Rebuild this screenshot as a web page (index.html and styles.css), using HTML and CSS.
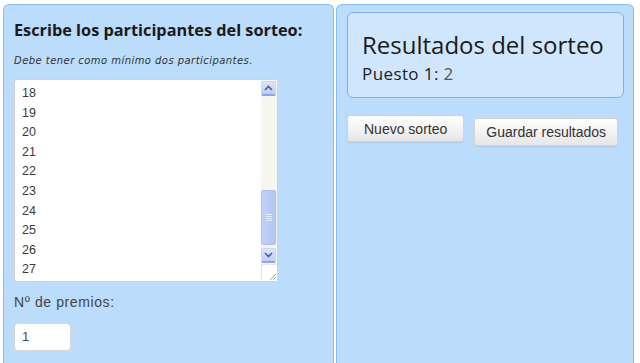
FILE: index.html
```html
<!DOCTYPE html>
<html lang="es">
<head>
  <meta charset="UTF-8">
  <title>Sorteo</title>
  <link rel="stylesheet" href="styles.css">
</head>
<body>

<div class="page">
  <section class="panel panel-left">
    <h2 class="title">Escribe los participantes del sorteo:</h2>
    <p class="hint">Debe tener como mínimo dos participantes.</p>

    <div class="textarea">
      <div class="lines">
        <div>18</div>
        <div>19</div>
        <div>20</div>
        <div>21</div>
        <div>22</div>
        <div>23</div>
        <div>24</div>
        <div>25</div>
        <div>26</div>
        <div>27</div>
      </div>
      <div class="scrollbar">
        <div class="sb-btn">
          <svg width="9" height="6" viewBox="0 0 9 6"><path d="M1 5 L4.5 1.5 L8 5" fill="none" stroke="#4d6185" stroke-width="1.6"/></svg>
        </div>
        <div class="sb-track">
          <div class="sb-thumb"><span></span><span></span><span></span><span></span></div>
        </div>
        <div class="sb-btn">
          <svg width="9" height="6" viewBox="0 0 9 6"><path d="M1 1 L4.5 4.5 L8 1" fill="none" stroke="#4d6185" stroke-width="1.6"/></svg>
        </div>
        <div class="sb-corner">
          <svg width="10" height="10" viewBox="0 0 10 10"><path d="M9 3 L3 9 M9 6 L6 9" stroke="#a8a8a8" stroke-width="1"/></svg>
        </div>
      </div>
    </div>

    <label class="label">Nº de premios:</label>
    <div class="num-input">1</div>
  </section>

  <section class="panel panel-right">
    <div class="results">
      <h1 class="results-title">Resultados del sorteo</h1>
      <p class="results-row">Puesto 1: <span class="winner">2</span></p>
    </div>
    <div class="actions">
      <button class="btn btn-new">Nuevo sorteo</button>
      <button class="btn btn-save">Guardar resultados</button>
    </div>
  </section>
</div>

</body>
</html>
```

FILE: styles.css
```css
:root {
  --panel-bg: #bbdcfb;
  --panel-border: #85bcf2;
  --box-bg: #cfe6fd;
  --text-dark: #1a1a1a;
  --text-soft: #444;
}
* {
  margin: 0;
  padding: 0;
  box-sizing: border-box;
}
body {
  background: #fff;
  font-family: 'Liberation Sans', Arial, sans-serif;
  overflow: hidden;
}
.page {
  display: flex;
  gap: 2px;
  padding: 4px 0 0 3px;
  height: 363px;
  overflow: hidden;
}
.panel {
  background: var(--panel-bg);
  border: 1px solid var(--panel-border);
  border-bottom: none;
  border-radius: 6px 6px 0 0;
  height: 359px;
}
.panel-left {
  width: 331px;
  padding: 15px 10px 0 10px;
}
.panel-right {
  width: 298px;
  padding: 7px 9px 0 10px;
}
.title {
  font-family: 'Open Sans', 'DejaVu Sans', sans-serif;
  font-weight: 700;
  font-size: 16.3px;
  line-height: 20px;
  color: var(--text-dark);
}
.hint {
  font-family: 'DejaVu Sans', sans-serif;
  font-style: italic;
  font-size: 10px;
  line-height: 13px;
  letter-spacing: 0.45px;
  color: #333;
  margin-top: 14px;
}
.textarea {
  display: flex;
  width: 264px;
  height: 203px;
  margin-top: 12px;
  background: #fff;
  border: 1px solid #d2d2d2;
  border-radius: 3px;
}
.lines {
  flex: 1;
  padding: 4px 0 0 7px;
  font-size: 12.5px;
  line-height: 19.6px;
  color: #3a3a3a;
}
.scrollbar {
  width: 16px;
  display: flex;
  flex-direction: column;
  background: #f6f6ef;
}
.sb-btn {
  height: 15px;
  margin: 1px 1px 0 0;
  display: flex;
  align-items: center;
  justify-content: center;
  background: linear-gradient(#dae4fb, #bccdf5);
  border: 1px solid #c9d6f3;
  border-bottom: 2px solid #8aa6e6;
  border-radius: 2px;
}
.sb-track {
  flex: 1;
  display: flex;
  flex-direction: column;
  justify-content: flex-end;
  padding: 0 1px 2px 0;
}
.sb-thumb {
  height: 55px;
  display: flex;
  flex-direction: column;
  align-items: center;
  justify-content: center;
  gap: 1px;
  background: linear-gradient(90deg, #c2d2f7, #b2c6f4);
  border: 1px solid #a9bff0;
  border-radius: 2px;
}
.sb-thumb span {
  width: 6px;
  height: 1px;
  background: #e3eafb;
}
.sb-corner {
  height: 17px;
  margin-top: 1px;
  display: flex;
  align-items: flex-end;
  justify-content: flex-end;
  background: #fff;
  border-top: 1px solid #e6e6e6;
  border-left: 1px solid #e6e6e6;
}
.label {
  display: block;
  margin-top: 12px;
  font-size: 14px;
  line-height: 17px;
  color: var(--text-soft);
  letter-spacing: 0.6px;
}
.num-input {
  width: 57px;
  height: 28px;
  margin-top: 12px;
  padding: 5px 0 0 7px;
  background: #fff;
  border: 1px solid #d6d6d6;
  border-radius: 4px;
  font-size: 13px;
  color: #444;
}
.results {
  background: var(--box-bg);
  border: 1px solid #78b2f0;
  border-radius: 6px;
  height: 86px;
  padding: 18px 14px 0 14px;
}
.results-title {
  font-family: 'Open Sans', 'DejaVu Sans', sans-serif;
  font-weight: 400;
  font-size: 24px;
  line-height: 28px;
  color: var(--text-dark);
}
.results-row {
  font-family: 'Open Sans', 'DejaVu Sans', sans-serif;
  font-size: 17px;
  line-height: 20px;
  margin-top: 5px;
  letter-spacing: 0.4px;
  color: #222;
}
.winner {
  color: #555;
}
.actions {
  display: flex;
  align-items: flex-start;
  gap: 10px;
  margin-top: 17px;
}
.btn {
  font-family: 'Liberation Sans', Arial, sans-serif;
  font-size: 14px;
  color: #333;
  height: 27px;
  background: linear-gradient(#ffffff, #e6e6e6);
  border: 1px solid #d3d3d3;
  border-radius: 3px;
  box-shadow: 0 1px 1px rgba(0, 0, 0, 0.08);
}
.btn-new {
  padding: 0 16px;
}
.btn-save {
  margin-top: 3px;
  height: 28px;
  padding: 0 11px;
}
```
